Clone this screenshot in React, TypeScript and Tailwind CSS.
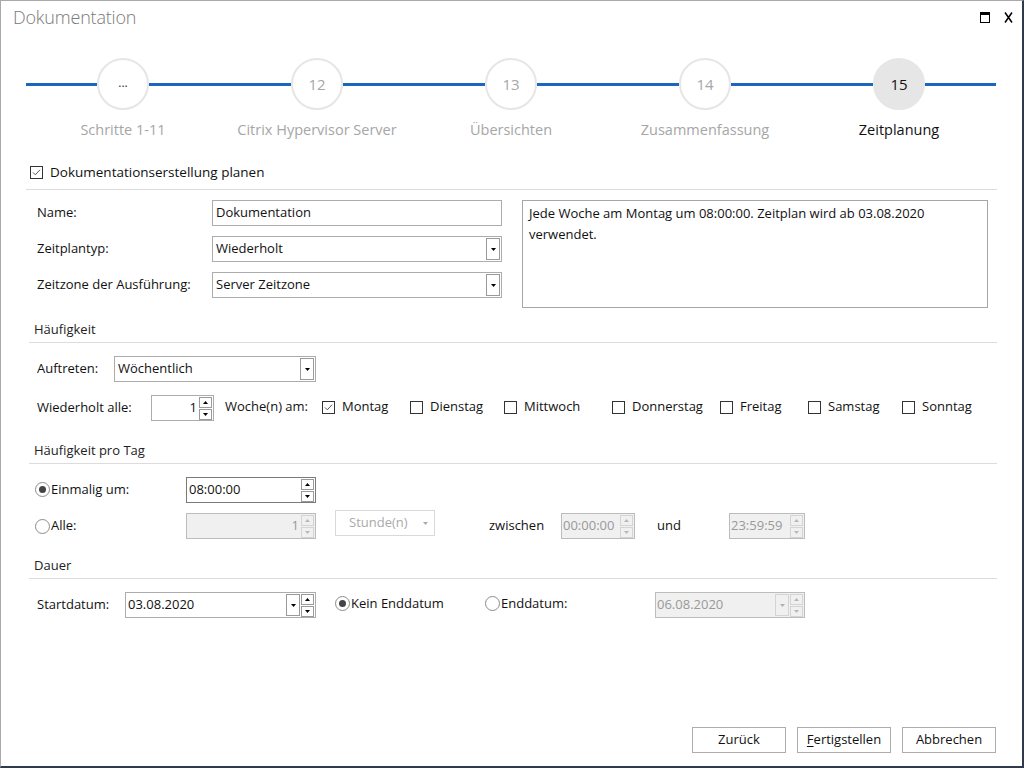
import React from "react";

const Arrow = ({ dir = "down", color = "#000" }: { dir?: "down" | "up"; color?: string }) => (
  <svg width="5" height="3" viewBox="0 0 5 3">
    {dir === "down" ? <path d="M0 0h5L2.5 3z" fill={color} /> : <path d="M0 3h5L2.5 0z" fill={color} />}
  </svg>
);

const DropBtn = ({ disabled = false }: { disabled?: boolean }) => (
  <div
    className={`w-[14px] h-[22px] flex items-center justify-center border ${
      disabled ? "border-[#d4d4d4] bg-[#f0f0f0]" : "border-[#9a9a9a] bg-white"
    }`}
  >
    <Arrow color={disabled ? "#b0b0b0" : "#000"} />
  </div>
);

const Spin = ({ disabled = false }: { disabled?: boolean }) => (
  <div className="flex flex-col gap-[1px] py-[1px] pr-[1px]">
    <div
      className={`w-[13px] h-[11px] flex items-center justify-center border ${
        disabled ? "border-[#d4d4d4]" : "border-[#9a9a9a]"
      }`}
    >
      <Arrow dir="up" color={disabled ? "#b8b8b8" : "#000"} />
    </div>
    <div
      className={`w-[13px] h-[11px] flex items-center justify-center border ${
        disabled ? "border-[#d4d4d4]" : "border-[#9a9a9a]"
      }`}
    >
      <Arrow color={disabled ? "#b8b8b8" : "#000"} />
    </div>
  </div>
);

const Check = ({ checked = false }: { checked?: boolean }) => (
  <div className="w-[13px] h-[13px] border border-[#333] bg-white flex items-center justify-center shrink-0">
    {checked && (
      <svg width="9" height="9" viewBox="0 0 9 9">
        <path d="M1 4.5l2.3 2.3L8 1.8" stroke="#555" strokeWidth="1" fill="none" />
      </svg>
    )}
  </div>
);

const Radio = ({ checked = false }: { checked?: boolean }) => (
  <div className="w-[15px] h-[15px] rounded-full border border-[#8c8c8c] bg-white flex items-center justify-center shrink-0">
    {checked && <div className="w-[7px] h-[7px] rounded-full bg-[#444]" />}
  </div>
);

const SectionHead = ({ children, mt }: { children: React.ReactNode; mt: string }) => (
  <div className={`${mt} ml-[28px] mr-[25px] border-b border-[#dcdcdc] pb-[3px]`}>
    <div className="h-[20px] leading-[20px] pl-[5px] text-[#222]">{children}</div>
  </div>
);

const Step = ({ n, label, active = false }: { n: string; label: string; active?: boolean }) => (
  <div className="w-[194px] flex flex-col items-center">
    <div className="w-full flex items-center">
      <div className="flex-1 h-[3px] bg-[#1a67bd]" />
      <div
        className={`w-[52px] h-[52px] rounded-full border-2 border-[#e6e6e6] flex items-center justify-center text-[15px] ${
          active ? "bg-[#e6e6e6] text-[#111]" : "bg-white text-[#a6a6a6]"
        }`}
      >
        {n === "..." ? <span className="text-[12px] text-[#333] -mt-[2px]">...</span> : n}
      </div>
      <div className="flex-1 h-[3px] bg-[#1a67bd]" />
    </div>
    <div
      className={`mt-[10px] h-[20px] leading-[20px] text-[14.5px] whitespace-nowrap ${
        active ? "text-[#111]" : "text-[#a6a6a6]"
      }`}
    >
      {label}
    </div>
  </div>
);

const Day = ({ label, w, checked = false }: { label: string; w: string; checked?: boolean }) => (
  <div className={`${w} flex items-center gap-[7px] shrink-0 -mt-[2px]`}>
    <Check checked={checked} />
    <span>{label}</span>
  </div>
);

export default function App() {
  return (
    <div className="w-[1024px] h-[768px] bg-white border-l border-t border-l-[#a9a9a9] border-t-[#a9a9a9] border-r-2 border-b-2 border-r-[#2f3b4c] border-b-[#2f3b4c] flex flex-col font-['Open_Sans',sans-serif] text-[13px] text-[#111] overflow-hidden">
      {/* title bar */}
      <div className="h-[33px] flex items-center justify-between pl-[12px] pr-[9px]">
        <div className="text-[18px] font-light text-[#7a7a7a] tracking-[-0.2px]">Dokumentation</div>
        <div className="flex items-center gap-[14px]">
          <svg width="10" height="11" viewBox="0 0 10 11">
            <rect x="0.5" y="0.5" width="9" height="10" fill="none" stroke="#000" />
            <rect x="0" y="0" width="10" height="3" fill="#000" />
          </svg>
          <svg width="9" height="11" viewBox="0 0 9 11">
            <path d="M1 0.5L8 10.5M8 0.5L1 10.5" stroke="#000" strokeWidth="1.5" />
          </svg>
        </div>
      </div>

      {/* stepper */}
      <div className="mt-[24px] ml-[25px] flex">
        <Step n="..." label="Schritte 1-11" />
        <Step n="12" label="Citrix Hypervisor Server" />
        <Step n="13" label="Übersichten" />
        <Step n="14" label="Zusammenfassung" />
        <Step n="15" label="Zeitplanung" active />
      </div>

      {/* plan checkbox */}
      <div className="mt-[22px] ml-[29px] h-[20px] flex items-center gap-[7px]">
        <Check checked />
        <span className="text-[13.5px]">Dokumentationserstellung planen</span>
      </div>
      <div className="mt-[7px] ml-[25px] mr-[25px] h-px bg-[#dcdcdc]" />

      {/* general */}
      <div className="mt-[10px] flex">
        <div className="ml-[36px] flex flex-col gap-[10px]">
          <div className="flex items-center h-[26px]">
            <div className="w-[175px]">Name:</div>
            <div className="w-[290px] h-[26px] border border-[#acacac] flex items-center px-[3px]">Dokumentation</div>
          </div>
          <div className="flex items-center h-[26px]">
            <div className="w-[175px]">Zeitplantyp:</div>
            <div className="w-[290px] h-[26px] border border-[#acacac] flex items-center justify-between pl-[3px] pr-[1px]">
              <span>Wiederholt</span>
              <DropBtn />
            </div>
          </div>
          <div className="flex items-center h-[26px]">
            <div className="w-[175px]">Zeitzone der Ausführung:</div>
            <div className="w-[290px] h-[26px] border border-[#acacac] flex items-center justify-between pl-[3px] pr-[1px]">
              <span>Server Zeitzone</span>
              <DropBtn />
            </div>
          </div>
        </div>
        <div className="ml-[20px] w-[466px] h-[108px] border border-[#a6a6a6] px-[6px] py-[2px] leading-[21px]">
          Jede Woche am Montag um 08:00:00. Zeitplan wird ab 03.08.2020 verwendet.
        </div>
      </div>

      {/* Häufigkeit */}
      <SectionHead mt="mt-[11px]">Häufigkeit</SectionHead>
      <div className="mt-[13px] ml-[36px] flex items-center h-[26px]">
        <div className="w-[77px]">Auftreten:</div>
        <div className="w-[202px] h-[26px] border border-[#acacac] flex items-center justify-between pl-[3px] pr-[1px]">
          <span>Wöchentlich</span>
          <DropBtn />
        </div>
      </div>
      <div className="mt-[13px] ml-[36px] flex items-center h-[26px]">
        <div className="w-[114px]">Wiederholt alle:</div>
        <div className="w-[63px] h-[26px] border border-[#acacac] flex items-center justify-end">
          <span className="mr-[2px]">1</span>
          <Spin />
        </div>
        <div className="ml-[11px] w-[97px] -mt-[2px]">Woche(n) am:</div>
        <Day label="Montag" w="w-[88px]" checked />
        <Day label="Dienstag" w="w-[94px]" />
        <Day label="Mittwoch" w="w-[108px]" />
        <Day label="Donnerstag" w="w-[108px]" />
        <Day label="Freitag" w="w-[88px]" />
        <Day label="Samstag" w="w-[94px]" />
        <Day label="Sonntag" w="w-[80px]" />
      </div>

      {/* Häufigkeit pro Tag */}
      <SectionHead mt="mt-[19px]">Häufigkeit pro Tag</SectionHead>
      <div className="mt-[13px] ml-[34px] flex items-center h-[26px]">
        <div className="w-[151px] flex items-center gap-[1px] -mt-[1px]">
          <Radio checked />
          <span>Einmalig um:</span>
        </div>
        <div className="w-[130px] h-[26px] border border-[#7a7a7a] flex items-center justify-between pl-[2px]">
          <span>08:00:00</span>
          <Spin />
        </div>
      </div>
      <div className="mt-[10px] ml-[34px] flex items-center h-[26px]">
        <div className="w-[151px] flex items-center gap-[1px]">
          <Radio />
          <span>Alle:</span>
        </div>
        <div className="w-[130px] h-[26px] border border-[#bcbcbc] bg-[#f0f0f0] flex items-center justify-end text-[#999]">
          <span className="mr-[2px]">1</span>
          <Spin disabled />
        </div>
        <div className="ml-[19px] -mt-[6px] w-[100px] h-[26px] border border-[#d9d9d9] flex items-center justify-between pl-[13px] pr-[6px] text-[#aaa]">
          <span>Stunde(n)</span>
          <Arrow color="#aaa" />
        </div>
        <div className="ml-[54px] w-[72px]">zwischen</div>
        <div className="w-[74px] h-[26px] border border-[#bcbcbc] bg-[#f0f0f0] flex items-center justify-between text-[#999]">
          <span className="pl-[1px]">00:00:00</span>
          <Spin disabled />
        </div>
        <div className="ml-[22px] w-[72px]">und</div>
        <div className="w-[76px] h-[26px] border border-[#bcbcbc] bg-[#f0f0f0] flex items-center justify-between text-[#999]">
          <span className="pl-[1px]">23:59:59</span>
          <Spin disabled />
        </div>
      </div>

      {/* Dauer */}
      <SectionHead mt="mt-[16px]">Dauer</SectionHead>
      <div className="mt-[13px] ml-[36px] flex items-center h-[26px]">
        <div className="w-[88px]">Startdatum:</div>
        <div className="w-[191px] h-[26px] border border-[#acacac] flex items-center justify-between pl-[2px]">
          <span>03.08.2020</span>
          <div className="flex items-center gap-[1px]">
            <DropBtn />
            <Spin />
          </div>
        </div>
        <div className="ml-[19px] w-[150px] flex items-center gap-[1px] -mt-[3px]">
          <Radio checked />
          <span>Kein Enddatum</span>
        </div>
        <div className="w-[170px] flex items-center gap-[1px] -mt-[3px]">
          <Radio />
          <span>Enddatum:</span>
        </div>
        <div className="w-[150px] h-[26px] border border-[#bcbcbc] bg-[#f0f0f0] flex items-center justify-between pl-[1px] text-[#999]">
          <span>06.08.2020</span>
          <div className="flex items-center gap-[1px]">
            <DropBtn disabled />
            <Spin disabled />
          </div>
        </div>
      </div>

      <div className="flex-1" />

      {/* buttons */}
      <div className="mb-[13px] mr-[26px] flex justify-end gap-[11px]">
        <button className="w-[94px] h-[26px] border border-[#adadad] bg-white">Zurück</button>
        <button className="w-[94px] h-[26px] border border-[#adadad] bg-white">
          <span className="underline underline-offset-2">F</span>ertigstellen
        </button>
        <button className="w-[94px] h-[26px] border border-[#adadad] bg-white">Abbrechen</button>
      </div>
    </div>
  );
}
